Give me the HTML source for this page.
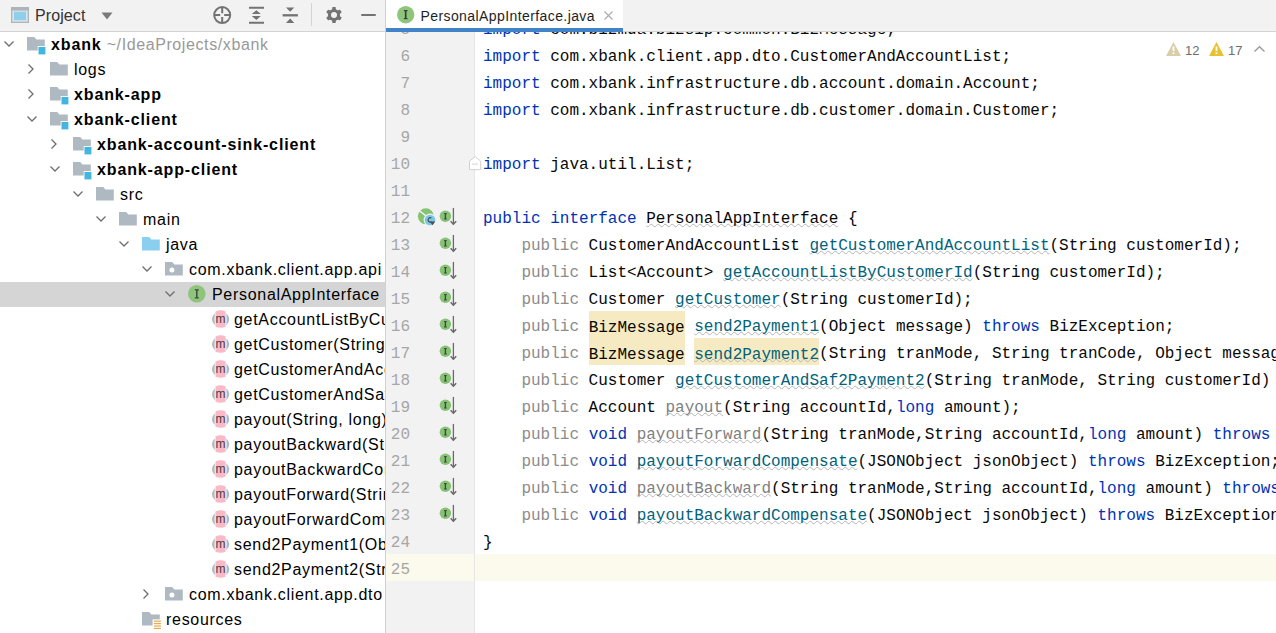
<!DOCTYPE html>
<html><head><meta charset="utf-8"><title>IDE</title>
<style>
*{box-sizing:border-box;margin:0;padding:0}
html,body{width:1276px;height:633px;overflow:hidden;background:#fff}
body{position:relative;font-family:"Liberation Sans",sans-serif}
.abs{position:absolute}
svg{position:absolute;overflow:visible}
#lp{position:absolute;left:0;top:0;width:385px;height:633px;background:#fff;overflow:hidden}
#lph{position:absolute;left:0;top:0;width:385px;height:32px;background:#F2F2F2;border-bottom:1px solid #D4D4D4}
#div{position:absolute;left:385px;top:0;width:1px;height:633px;background:#D1D1D1}
.row{position:absolute;left:0;width:385px;height:25px;white-space:nowrap}
.sel{background:#D5D5D5}
.tx{position:absolute;top:0;line-height:25px;font-size:16px;letter-spacing:0.7px;color:#000;white-space:nowrap}
.b{font-weight:bold;letter-spacing:0.87px}
.gr{color:#999999;font-weight:normal;letter-spacing:0.6px}
#ed{position:absolute;left:386px;top:0;width:890px;height:633px;overflow:hidden;background:#fff}
#tabbar{position:absolute;left:0;top:0;width:890px;height:32px;background:#F2F2F2;border-bottom:1px solid #D4D4D4}
#tab{position:absolute;left:0;top:0;width:237px;height:32px;background:#fff}
#tabul{position:absolute;left:0;top:28px;width:237px;height:4px;background:#4083C9}
#gut{position:absolute;left:0;top:32px;width:89px;height:601px;background:#F2F2F2;border-right:1px solid #E6E6E6}
#caret{position:absolute;left:0;top:554px;width:890px;height:27px;background:#FCFAED}
#code{position:absolute;left:97px;top:17px;font-family:"Liberation Mono",monospace;font-size:16px;line-height:27px;white-space:pre;color:#080808}
.cl{height:27px}
.ln{position:absolute;left:0;width:24px;text-align:right;font-family:"Liberation Mono",monospace;font-size:16px;color:#A6A6A6;line-height:27px}
.k{color:#0033B3}
.p{color:#8C8C8C}
.m{color:#00627A}
.u{color:#808080}
.w{text-decoration:underline wavy #B4B4B4;text-decoration-thickness:1px;text-underline-offset:0px;text-decoration-skip-ink:none}
.hl{background:#F5EAC1;padding:7.5px 0 1.5px 0}
</style></head><body>
<div id="lp">
<div id="lph">
<svg style="left:11px;top:7px" width="19" height="17" viewBox="0 0 19 17"><rect x="0" y="0" width="18" height="16" fill="#ADB4BA"/><rect x="1.3" y="3.6" width="15.4" height="11.1" fill="#DDE3E7"/><rect x="3" y="4.8" width="12" height="8.4" fill="#8ED0EB"/></svg>
<div class="tx" style="left:35px;top:3px;color:#333;letter-spacing:0.1px">Project</div>
<svg style="left:101px;top:12px" width="12" height="8"><path d="M0.5 0.5 L11.5 0.5 L6 7.5Z" fill="#7A7A7A"/></svg>
<svg style="left:213px;top:6px" width="19" height="19" viewBox="0 0 19 19"><circle cx="9.2" cy="9.1" r="8" fill="none" stroke="#737373" stroke-width="2"/><path d="M9.2 1.5 V7.2 M9.2 11 V16.8 M1.5 9.1 H7.2 M11.2 9.1 H16.8" stroke="#737373" stroke-width="2"/></svg>
<svg style="left:248px;top:6px" width="17" height="18" viewBox="0 0 17 18"><path d="M1 1.75 H16 M1 16.7 H16" stroke="#737373" stroke-width="2.1"/><path d="M3.8 8.1 L8.4 4.2 L12.8 8.1Z M3.8 10.1 L8.4 14 L12.8 10.1Z" fill="#737373"/></svg>
<svg style="left:282px;top:6px" width="16" height="18" viewBox="0 0 16 18"><path d="M0.6 9.3 H15.9" stroke="#737373" stroke-width="2.3"/><path d="M4 1.4 H12.3 L8.15 5.8Z M4 17.1 H12.3 L8.15 12.4Z" fill="#737373"/></svg>
<div class="abs" style="left:311px;top:3px;width:1px;height:23px;background:#D3D3D3"></div>
<svg style="left:326px;top:7px" width="16" height="16" viewBox="0 0 16 16"><g fill="#737373"><circle cx="8" cy="8" r="6.1"/><rect x="6.2" y="0" width="3.6" height="16" rx="0.8"/><rect x="6.2" y="0" width="3.6" height="16" rx="0.8" transform="rotate(60 8 8)"/><rect x="6.2" y="0" width="3.6" height="16" rx="0.8" transform="rotate(120 8 8)"/></g><circle cx="8" cy="8" r="3" fill="#F2F2F2"/></svg>
<div class="abs" style="left:360.5px;top:14px;width:15.5px;height:2.2px;background:#737373;border-radius:1px"></div>
</div>
<div class="row" style="top:32px"><svg style="left:3.8px;top:8.7px" width="10" height="6"><path d="M0.5 0.5 L5 5 L9.5 0.5" fill="none" stroke="#6E6E6E" stroke-width="1.3"/></svg><svg style="left:27.1px;top:4.6px" width="19" height="18" viewBox="0 0 19 18"><path d="M0 0 H7.2 L9.4 2.4 H17.8 V13.6 H0 Z" fill="#AFB9C1"/><rect x="10.7" y="9.1" width="8.3" height="8.6" fill="#fff"/><rect x="11.5" y="10" width="6.9" height="7.4" fill="#40B6E0"/></svg><div class="tx" style="left:51px"><span class="b">xbank</span><span class="gr">  ~/IdeaProjects/xbank</span></div></div>
<div class="row" style="top:57px"><svg style="left:28.4px;top:6.6px" width="6" height="10"><path d="M0.5 0.5 L5 5 L0.5 9.5" fill="none" stroke="#6E6E6E" stroke-width="1.3"/></svg><svg style="left:50.1px;top:4.6px" width="19" height="18" viewBox="0 0 19 18"><path d="M0 0 H7.2 L9.4 2.4 H17.8 V13.6 H0 Z" fill="#AFB9C1"/></svg><div class="tx" style="left:74px">logs</div></div>
<div class="row" style="top:82px"><svg style="left:28.4px;top:6.6px" width="6" height="10"><path d="M0.5 0.5 L5 5 L0.5 9.5" fill="none" stroke="#6E6E6E" stroke-width="1.3"/></svg><svg style="left:50.1px;top:4.6px" width="19" height="18" viewBox="0 0 19 18"><path d="M0 0 H7.2 L9.4 2.4 H17.8 V13.6 H0 Z" fill="#AFB9C1"/><rect x="10.7" y="9.1" width="8.3" height="8.6" fill="#fff"/><rect x="11.5" y="10" width="6.9" height="7.4" fill="#40B6E0"/></svg><div class="tx" style="left:74px"><span class="b">xbank-app</span></div></div>
<div class="row" style="top:107px"><svg style="left:26.8px;top:8.7px" width="10" height="6"><path d="M0.5 0.5 L5 5 L9.5 0.5" fill="none" stroke="#6E6E6E" stroke-width="1.3"/></svg><svg style="left:50.1px;top:4.6px" width="19" height="18" viewBox="0 0 19 18"><path d="M0 0 H7.2 L9.4 2.4 H17.8 V13.6 H0 Z" fill="#AFB9C1"/><rect x="10.7" y="9.1" width="8.3" height="8.6" fill="#fff"/><rect x="11.5" y="10" width="6.9" height="7.4" fill="#40B6E0"/></svg><div class="tx" style="left:74px"><span class="b">xbank-client</span></div></div>
<div class="row" style="top:132px"><svg style="left:51.4px;top:6.6px" width="6" height="10"><path d="M0.5 0.5 L5 5 L0.5 9.5" fill="none" stroke="#6E6E6E" stroke-width="1.3"/></svg><svg style="left:73.1px;top:4.6px" width="19" height="18" viewBox="0 0 19 18"><path d="M0 0 H7.2 L9.4 2.4 H17.8 V13.6 H0 Z" fill="#AFB9C1"/><rect x="10.7" y="9.1" width="8.3" height="8.6" fill="#fff"/><rect x="11.5" y="10" width="6.9" height="7.4" fill="#40B6E0"/></svg><div class="tx" style="left:97px"><span class="b">xbank-account-sink-client</span></div></div>
<div class="row" style="top:157px"><svg style="left:49.8px;top:8.7px" width="10" height="6"><path d="M0.5 0.5 L5 5 L9.5 0.5" fill="none" stroke="#6E6E6E" stroke-width="1.3"/></svg><svg style="left:73.1px;top:4.6px" width="19" height="18" viewBox="0 0 19 18"><path d="M0 0 H7.2 L9.4 2.4 H17.8 V13.6 H0 Z" fill="#AFB9C1"/><rect x="10.7" y="9.1" width="8.3" height="8.6" fill="#fff"/><rect x="11.5" y="10" width="6.9" height="7.4" fill="#40B6E0"/></svg><div class="tx" style="left:97px"><span class="b">xbank-app-client</span></div></div>
<div class="row" style="top:182px"><svg style="left:72.8px;top:8.7px" width="10" height="6"><path d="M0.5 0.5 L5 5 L9.5 0.5" fill="none" stroke="#6E6E6E" stroke-width="1.3"/></svg><svg style="left:96.1px;top:4.6px" width="19" height="18" viewBox="0 0 19 18"><path d="M0 0 H7.2 L9.4 2.4 H17.8 V13.6 H0 Z" fill="#AFB9C1"/></svg><div class="tx" style="left:120px">src</div></div>
<div class="row" style="top:207px"><svg style="left:95.8px;top:8.7px" width="10" height="6"><path d="M0.5 0.5 L5 5 L9.5 0.5" fill="none" stroke="#6E6E6E" stroke-width="1.3"/></svg><svg style="left:119.1px;top:4.6px" width="19" height="18" viewBox="0 0 19 18"><path d="M0 0 H7.2 L9.4 2.4 H17.8 V13.6 H0 Z" fill="#AFB9C1"/></svg><div class="tx" style="left:143px">main</div></div>
<div class="row" style="top:232px"><svg style="left:118.8px;top:8.7px" width="10" height="6"><path d="M0.5 0.5 L5 5 L9.5 0.5" fill="none" stroke="#6E6E6E" stroke-width="1.3"/></svg><svg style="left:142.1px;top:4.6px" width="19" height="18" viewBox="0 0 19 18"><path d="M0 0 H7.2 L9.4 2.4 H17.8 V13.6 H0 Z" fill="#8ACFEF"/></svg><div class="tx" style="left:166px">java</div></div>
<div class="row" style="top:257px"><svg style="left:141.8px;top:8.7px" width="10" height="6"><path d="M0.5 0.5 L5 5 L9.5 0.5" fill="none" stroke="#6E6E6E" stroke-width="1.3"/></svg><svg style="left:165.1px;top:4.6px" width="19" height="18" viewBox="0 0 19 18"><path d="M0 0 H7.2 L9.4 2.4 H17.8 V13.6 H0 Z" fill="#AFB9C1"/><circle cx="6.9" cy="7.9" r="2.5" fill="#fff"/></svg><div class="tx" style="left:189px">com.xbank.client.app.api</div></div>
<div class="row sel" style="top:282px"><svg style="left:164.8px;top:8.7px" width="10" height="6"><path d="M0.5 0.5 L5 5 L9.5 0.5" fill="none" stroke="#6E6E6E" stroke-width="1.3"/></svg><svg style="left:188.29999999999998px;top:3.1999999999999993px" width="17.6" height="17.6" viewBox="0 0 17.6 17.6"><circle cx="8.8" cy="8.8" r="8.8" fill="#8DC67B"/><path d="M6.800000000000001 4.800000000000001 H10.8 M6.800000000000001 12.8 H10.8" stroke="#3F4A3F" stroke-width="1.3" fill="none"/><path d="M8.8 4.800000000000001 V12.8" stroke="#3F4A3F" stroke-width="1.5" fill="none"/></svg><div class="tx" style="left:212px">PersonalAppInterface</div></div>
<div class="row" style="top:307px"><svg style="left:210.5px;top:2.5999999999999996px" width="20" height="18" viewBox="0 0 20 18"><path d="M3.9 3.2 Q-2.2 9.25 3.9 15.3 Q3.2 9.25 3.9 3.2Z" fill="#AEB9C3"/><path d="M15.3 3.2 Q21.4 9.25 15.3 15.3 Q16 9.25 15.3 3.2Z" fill="#AEB9C3"/><path d="M4.5 1.4 Q9.55 -0.7 14.6 1.4 V16.8 Q9.55 18.9 4.5 16.8 Z" fill="#F9B9C6"/><text x="9.6" y="13" text-anchor="middle" font-family="Liberation Sans" font-size="12" fill="#4B3B3F">m</text></svg><div class="tx" style="left:234px">getAccountListByCustomerId(String)</div></div>
<div class="row" style="top:332px"><svg style="left:210.5px;top:2.5999999999999996px" width="20" height="18" viewBox="0 0 20 18"><path d="M3.9 3.2 Q-2.2 9.25 3.9 15.3 Q3.2 9.25 3.9 3.2Z" fill="#AEB9C3"/><path d="M15.3 3.2 Q21.4 9.25 15.3 15.3 Q16 9.25 15.3 3.2Z" fill="#AEB9C3"/><path d="M4.5 1.4 Q9.55 -0.7 14.6 1.4 V16.8 Q9.55 18.9 4.5 16.8 Z" fill="#F9B9C6"/><text x="9.6" y="13" text-anchor="middle" font-family="Liberation Sans" font-size="12" fill="#4B3B3F">m</text></svg><div class="tx" style="left:234px">getCustomer(String)</div></div>
<div class="row" style="top:357px"><svg style="left:210.5px;top:2.5999999999999996px" width="20" height="18" viewBox="0 0 20 18"><path d="M3.9 3.2 Q-2.2 9.25 3.9 15.3 Q3.2 9.25 3.9 3.2Z" fill="#AEB9C3"/><path d="M15.3 3.2 Q21.4 9.25 15.3 15.3 Q16 9.25 15.3 3.2Z" fill="#AEB9C3"/><path d="M4.5 1.4 Q9.55 -0.7 14.6 1.4 V16.8 Q9.55 18.9 4.5 16.8 Z" fill="#F9B9C6"/><text x="9.6" y="13" text-anchor="middle" font-family="Liberation Sans" font-size="12" fill="#4B3B3F">m</text></svg><div class="tx" style="left:234px">getCustomerAndAccountList(String)</div></div>
<div class="row" style="top:382px"><svg style="left:210.5px;top:2.5999999999999996px" width="20" height="18" viewBox="0 0 20 18"><path d="M3.9 3.2 Q-2.2 9.25 3.9 15.3 Q3.2 9.25 3.9 3.2Z" fill="#AEB9C3"/><path d="M15.3 3.2 Q21.4 9.25 15.3 15.3 Q16 9.25 15.3 3.2Z" fill="#AEB9C3"/><path d="M4.5 1.4 Q9.55 -0.7 14.6 1.4 V16.8 Q9.55 18.9 4.5 16.8 Z" fill="#F9B9C6"/><text x="9.6" y="13" text-anchor="middle" font-family="Liberation Sans" font-size="12" fill="#4B3B3F">m</text></svg><div class="tx" style="left:234px">getCustomerAndSaf2Payment2(String, String)</div></div>
<div class="row" style="top:407px"><svg style="left:210.5px;top:2.5999999999999996px" width="20" height="18" viewBox="0 0 20 18"><path d="M3.9 3.2 Q-2.2 9.25 3.9 15.3 Q3.2 9.25 3.9 3.2Z" fill="#AEB9C3"/><path d="M15.3 3.2 Q21.4 9.25 15.3 15.3 Q16 9.25 15.3 3.2Z" fill="#AEB9C3"/><path d="M4.5 1.4 Q9.55 -0.7 14.6 1.4 V16.8 Q9.55 18.9 4.5 16.8 Z" fill="#F9B9C6"/><text x="9.6" y="13" text-anchor="middle" font-family="Liberation Sans" font-size="12" fill="#4B3B3F">m</text></svg><div class="tx" style="left:234px">payout(String, long)</div></div>
<div class="row" style="top:432px"><svg style="left:210.5px;top:2.5999999999999996px" width="20" height="18" viewBox="0 0 20 18"><path d="M3.9 3.2 Q-2.2 9.25 3.9 15.3 Q3.2 9.25 3.9 3.2Z" fill="#AEB9C3"/><path d="M15.3 3.2 Q21.4 9.25 15.3 15.3 Q16 9.25 15.3 3.2Z" fill="#AEB9C3"/><path d="M4.5 1.4 Q9.55 -0.7 14.6 1.4 V16.8 Q9.55 18.9 4.5 16.8 Z" fill="#F9B9C6"/><text x="9.6" y="13" text-anchor="middle" font-family="Liberation Sans" font-size="12" fill="#4B3B3F">m</text></svg><div class="tx" style="left:234px">payoutBackward(String, String, long)</div></div>
<div class="row" style="top:457px"><svg style="left:210.5px;top:2.5999999999999996px" width="20" height="18" viewBox="0 0 20 18"><path d="M3.9 3.2 Q-2.2 9.25 3.9 15.3 Q3.2 9.25 3.9 3.2Z" fill="#AEB9C3"/><path d="M15.3 3.2 Q21.4 9.25 15.3 15.3 Q16 9.25 15.3 3.2Z" fill="#AEB9C3"/><path d="M4.5 1.4 Q9.55 -0.7 14.6 1.4 V16.8 Q9.55 18.9 4.5 16.8 Z" fill="#F9B9C6"/><text x="9.6" y="13" text-anchor="middle" font-family="Liberation Sans" font-size="12" fill="#4B3B3F">m</text></svg><div class="tx" style="left:234px">payoutBackwardCompensate(JSONObject)</div></div>
<div class="row" style="top:482px"><svg style="left:210.5px;top:2.5999999999999996px" width="20" height="18" viewBox="0 0 20 18"><path d="M3.9 3.2 Q-2.2 9.25 3.9 15.3 Q3.2 9.25 3.9 3.2Z" fill="#AEB9C3"/><path d="M15.3 3.2 Q21.4 9.25 15.3 15.3 Q16 9.25 15.3 3.2Z" fill="#AEB9C3"/><path d="M4.5 1.4 Q9.55 -0.7 14.6 1.4 V16.8 Q9.55 18.9 4.5 16.8 Z" fill="#F9B9C6"/><text x="9.6" y="13" text-anchor="middle" font-family="Liberation Sans" font-size="12" fill="#4B3B3F">m</text></svg><div class="tx" style="left:234px">payoutForward(String, String, long)</div></div>
<div class="row" style="top:507px"><svg style="left:210.5px;top:2.5999999999999996px" width="20" height="18" viewBox="0 0 20 18"><path d="M3.9 3.2 Q-2.2 9.25 3.9 15.3 Q3.2 9.25 3.9 3.2Z" fill="#AEB9C3"/><path d="M15.3 3.2 Q21.4 9.25 15.3 15.3 Q16 9.25 15.3 3.2Z" fill="#AEB9C3"/><path d="M4.5 1.4 Q9.55 -0.7 14.6 1.4 V16.8 Q9.55 18.9 4.5 16.8 Z" fill="#F9B9C6"/><text x="9.6" y="13" text-anchor="middle" font-family="Liberation Sans" font-size="12" fill="#4B3B3F">m</text></svg><div class="tx" style="left:234px">payoutForwardCompensate(JSONObject)</div></div>
<div class="row" style="top:532px"><svg style="left:210.5px;top:2.5999999999999996px" width="20" height="18" viewBox="0 0 20 18"><path d="M3.9 3.2 Q-2.2 9.25 3.9 15.3 Q3.2 9.25 3.9 3.2Z" fill="#AEB9C3"/><path d="M15.3 3.2 Q21.4 9.25 15.3 15.3 Q16 9.25 15.3 3.2Z" fill="#AEB9C3"/><path d="M4.5 1.4 Q9.55 -0.7 14.6 1.4 V16.8 Q9.55 18.9 4.5 16.8 Z" fill="#F9B9C6"/><text x="9.6" y="13" text-anchor="middle" font-family="Liberation Sans" font-size="12" fill="#4B3B3F">m</text></svg><div class="tx" style="left:234px">send2Payment1(Object)</div></div>
<div class="row" style="top:557px"><svg style="left:210.5px;top:2.5999999999999996px" width="20" height="18" viewBox="0 0 20 18"><path d="M3.9 3.2 Q-2.2 9.25 3.9 15.3 Q3.2 9.25 3.9 3.2Z" fill="#AEB9C3"/><path d="M15.3 3.2 Q21.4 9.25 15.3 15.3 Q16 9.25 15.3 3.2Z" fill="#AEB9C3"/><path d="M4.5 1.4 Q9.55 -0.7 14.6 1.4 V16.8 Q9.55 18.9 4.5 16.8 Z" fill="#F9B9C6"/><text x="9.6" y="13" text-anchor="middle" font-family="Liberation Sans" font-size="12" fill="#4B3B3F">m</text></svg><div class="tx" style="left:234px">send2Payment2(String, String, Object)</div></div>
<div class="row" style="top:582px"><svg style="left:143.4px;top:6.6px" width="6" height="10"><path d="M0.5 0.5 L5 5 L0.5 9.5" fill="none" stroke="#6E6E6E" stroke-width="1.3"/></svg><svg style="left:165.1px;top:4.6px" width="19" height="18" viewBox="0 0 19 18"><path d="M0 0 H7.2 L9.4 2.4 H17.8 V13.6 H0 Z" fill="#AFB9C1"/><circle cx="6.9" cy="7.9" r="2.5" fill="#fff"/></svg><div class="tx" style="left:189px">com.xbank.client.app.dto</div></div>
<div class="row" style="top:607px"><svg style="left:142.1px;top:4.6px" width="19" height="18" viewBox="0 0 19 18"><path d="M0 0 H7.2 L9.4 2.4 H17.8 V13.6 H0 Z" fill="#AFB9C1"/><rect x="10.6" y="7.4" width="8.4" height="10.6" fill="#fff"/><g fill="#E8A94A"><rect x="11.9" y="8.6" width="7" height="1.2"/><rect x="11.9" y="11" width="7" height="1.2"/><rect x="11.9" y="13.4" width="7" height="1.2"/><rect x="11.9" y="15.8" width="7" height="1.2"/></g></svg><div class="tx" style="left:166px">resources</div></div>
</div>
<div id="div"></div>
<div id="ed">
<div id="caret"></div>
<div id="code"><div class="cl"><span class="k">import</span> com.bizmda.bizsip.common.BizMessage;</div><div class="cl"><span class="k">import</span> com.xbank.client.app.dto.CustomerAndAccountList;</div><div class="cl"><span class="k">import</span> com.xbank.infrastructure.db.account.domain.Account;</div><div class="cl"><span class="k">import</span> com.xbank.infrastructure.db.customer.domain.Customer;</div><div class="cl"></div><div class="cl"><span class="k">import</span> java.util.List;</div><div class="cl"></div><div class="cl"><span class="k">public</span> <span class="k">interface</span> <span class="w">PersonalAppInterface</span> {</div><div class="cl">    <span class="p">public</span> CustomerAndAccountList <span class="m w">getCustomerAndAccountList</span>(String customerId);</div><div class="cl">    <span class="p">public</span> List&lt;Account&gt; <span class="m w">getAccountListByCustomerId</span>(String customerId);</div><div class="cl">    <span class="p">public</span> Customer <span class="m w">getCustomer</span>(String customerId);</div><div class="cl">    <span class="p">public</span> <span class="hl">BizMessage</span> <span class="m w">send2Payment1</span>(Object message) <span class="k">throws</span> BizException;</div><div class="cl">    <span class="p">public</span> <span class="hl">BizMessage</span> <span class="m w hl">send2Payment2</span>(String tranMode, String tranCode, Object message) <span class="k">throws</span> BizException;</div><div class="cl">    <span class="p">public</span> Customer <span class="m w">getCustomerAndSaf2Payment2</span>(String tranMode, String customerId) <span class="k">throws</span> BizException;</div><div class="cl">    <span class="p">public</span> Account <span class="u w">payout</span>(String accountId,<span class="k">long</span> amount);</div><div class="cl">    <span class="p">public</span> <span class="k">void</span> <span class="u w">payoutForward</span>(String tranMode,String accountId,<span class="k">long</span> amount) <span class="k">throws</span> BizException;</div><div class="cl">    <span class="p">public</span> <span class="k">void</span> <span class="m w">payoutForwardCompensate</span>(JSONObject jsonObject) <span class="k">throws</span> BizException;</div><div class="cl">    <span class="p">public</span> <span class="k">void</span> <span class="u w">payoutBackward</span>(String tranMode,String accountId,<span class="k">long</span> amount) <span class="k">throws</span> BizException;</div><div class="cl">    <span class="p">public</span> <span class="k">void</span> <span class="m w">payoutBackwardCompensate</span>(JSONObject jsonObject) <span class="k">throws</span> BizException;</div><div class="cl">}</div><div class="cl"></div></div>
<div id="gut">
<div class="abs" style="left:0;top:522px;width:88px;height:27px;background:#FCFAED"></div>
<div class="ln" style="top:-15px">5</div>
<div class="ln" style="top:12px">6</div>
<div class="ln" style="top:39px">7</div>
<div class="ln" style="top:66px">8</div>
<div class="ln" style="top:93px">9</div>
<div class="ln" style="top:120px">10</div>
<div class="ln" style="top:147px">11</div>
<div class="ln" style="top:174px">12</div>
<div class="ln" style="top:201px">13</div>
<div class="ln" style="top:228px">14</div>
<div class="ln" style="top:255px">15</div>
<div class="ln" style="top:282px">16</div>
<div class="ln" style="top:309px">17</div>
<div class="ln" style="top:336px">18</div>
<div class="ln" style="top:363px">19</div>
<div class="ln" style="top:390px">20</div>
<div class="ln" style="top:417px">21</div>
<div class="ln" style="top:444px">22</div>
<div class="ln" style="top:471px">23</div>
<div class="ln" style="top:498px">24</div>
<div class="ln" style="top:525px">25</div>
<svg style="left:53px;top:173px" width="20" height="20" viewBox="0 0 20 20"><circle cx="6.4" cy="11.3" r="5.75" fill="#86C273"/><path d="M5 8.6 H7.8 M5 14 H7.8" stroke="#404540" stroke-width="1" fill="none"/><path d="M6.4 8.6 V14" stroke="#404540" stroke-width="1.35"/><path d="M14.4 2.9 V19.4" stroke="#6A6A6A" stroke-width="1.3" fill="none"/><path d="M11.6 16.3 L14.4 19.2 L17.2 16.3" stroke="#6A6A6A" stroke-width="1.5" fill="none"/></svg>
<svg style="left:53px;top:200px" width="20" height="20" viewBox="0 0 20 20"><circle cx="6.4" cy="11.3" r="5.75" fill="#86C273"/><path d="M5 8.6 H7.8 M5 14 H7.8" stroke="#404540" stroke-width="1" fill="none"/><path d="M6.4 8.6 V14" stroke="#404540" stroke-width="1.35"/><path d="M14.4 2.9 V19.4" stroke="#6A6A6A" stroke-width="1.3" fill="none"/><path d="M11.6 16.3 L14.4 19.2 L17.2 16.3" stroke="#6A6A6A" stroke-width="1.5" fill="none"/></svg>
<svg style="left:53px;top:227px" width="20" height="20" viewBox="0 0 20 20"><circle cx="6.4" cy="11.3" r="5.75" fill="#86C273"/><path d="M5 8.6 H7.8 M5 14 H7.8" stroke="#404540" stroke-width="1" fill="none"/><path d="M6.4 8.6 V14" stroke="#404540" stroke-width="1.35"/><path d="M14.4 2.9 V19.4" stroke="#6A6A6A" stroke-width="1.3" fill="none"/><path d="M11.6 16.3 L14.4 19.2 L17.2 16.3" stroke="#6A6A6A" stroke-width="1.5" fill="none"/></svg>
<svg style="left:53px;top:254px" width="20" height="20" viewBox="0 0 20 20"><circle cx="6.4" cy="11.3" r="5.75" fill="#86C273"/><path d="M5 8.6 H7.8 M5 14 H7.8" stroke="#404540" stroke-width="1" fill="none"/><path d="M6.4 8.6 V14" stroke="#404540" stroke-width="1.35"/><path d="M14.4 2.9 V19.4" stroke="#6A6A6A" stroke-width="1.3" fill="none"/><path d="M11.6 16.3 L14.4 19.2 L17.2 16.3" stroke="#6A6A6A" stroke-width="1.5" fill="none"/></svg>
<svg style="left:53px;top:281px" width="20" height="20" viewBox="0 0 20 20"><circle cx="6.4" cy="11.3" r="5.75" fill="#86C273"/><path d="M5 8.6 H7.8 M5 14 H7.8" stroke="#404540" stroke-width="1" fill="none"/><path d="M6.4 8.6 V14" stroke="#404540" stroke-width="1.35"/><path d="M14.4 2.9 V19.4" stroke="#6A6A6A" stroke-width="1.3" fill="none"/><path d="M11.6 16.3 L14.4 19.2 L17.2 16.3" stroke="#6A6A6A" stroke-width="1.5" fill="none"/></svg>
<svg style="left:53px;top:308px" width="20" height="20" viewBox="0 0 20 20"><circle cx="6.4" cy="11.3" r="5.75" fill="#86C273"/><path d="M5 8.6 H7.8 M5 14 H7.8" stroke="#404540" stroke-width="1" fill="none"/><path d="M6.4 8.6 V14" stroke="#404540" stroke-width="1.35"/><path d="M14.4 2.9 V19.4" stroke="#6A6A6A" stroke-width="1.3" fill="none"/><path d="M11.6 16.3 L14.4 19.2 L17.2 16.3" stroke="#6A6A6A" stroke-width="1.5" fill="none"/></svg>
<svg style="left:53px;top:335px" width="20" height="20" viewBox="0 0 20 20"><circle cx="6.4" cy="11.3" r="5.75" fill="#86C273"/><path d="M5 8.6 H7.8 M5 14 H7.8" stroke="#404540" stroke-width="1" fill="none"/><path d="M6.4 8.6 V14" stroke="#404540" stroke-width="1.35"/><path d="M14.4 2.9 V19.4" stroke="#6A6A6A" stroke-width="1.3" fill="none"/><path d="M11.6 16.3 L14.4 19.2 L17.2 16.3" stroke="#6A6A6A" stroke-width="1.5" fill="none"/></svg>
<svg style="left:53px;top:362px" width="20" height="20" viewBox="0 0 20 20"><circle cx="6.4" cy="11.3" r="5.75" fill="#86C273"/><path d="M5 8.6 H7.8 M5 14 H7.8" stroke="#404540" stroke-width="1" fill="none"/><path d="M6.4 8.6 V14" stroke="#404540" stroke-width="1.35"/><path d="M14.4 2.9 V19.4" stroke="#6A6A6A" stroke-width="1.3" fill="none"/><path d="M11.6 16.3 L14.4 19.2 L17.2 16.3" stroke="#6A6A6A" stroke-width="1.5" fill="none"/></svg>
<svg style="left:53px;top:389px" width="20" height="20" viewBox="0 0 20 20"><circle cx="6.4" cy="11.3" r="5.75" fill="#86C273"/><path d="M5 8.6 H7.8 M5 14 H7.8" stroke="#404540" stroke-width="1" fill="none"/><path d="M6.4 8.6 V14" stroke="#404540" stroke-width="1.35"/><path d="M14.4 2.9 V19.4" stroke="#6A6A6A" stroke-width="1.3" fill="none"/><path d="M11.6 16.3 L14.4 19.2 L17.2 16.3" stroke="#6A6A6A" stroke-width="1.5" fill="none"/></svg>
<svg style="left:53px;top:416px" width="20" height="20" viewBox="0 0 20 20"><circle cx="6.4" cy="11.3" r="5.75" fill="#86C273"/><path d="M5 8.6 H7.8 M5 14 H7.8" stroke="#404540" stroke-width="1" fill="none"/><path d="M6.4 8.6 V14" stroke="#404540" stroke-width="1.35"/><path d="M14.4 2.9 V19.4" stroke="#6A6A6A" stroke-width="1.3" fill="none"/><path d="M11.6 16.3 L14.4 19.2 L17.2 16.3" stroke="#6A6A6A" stroke-width="1.5" fill="none"/></svg>
<svg style="left:53px;top:443px" width="20" height="20" viewBox="0 0 20 20"><circle cx="6.4" cy="11.3" r="5.75" fill="#86C273"/><path d="M5 8.6 H7.8 M5 14 H7.8" stroke="#404540" stroke-width="1" fill="none"/><path d="M6.4 8.6 V14" stroke="#404540" stroke-width="1.35"/><path d="M14.4 2.9 V19.4" stroke="#6A6A6A" stroke-width="1.3" fill="none"/><path d="M11.6 16.3 L14.4 19.2 L17.2 16.3" stroke="#6A6A6A" stroke-width="1.5" fill="none"/></svg>
<svg style="left:53px;top:470px" width="20" height="20" viewBox="0 0 20 20"><circle cx="6.4" cy="11.3" r="5.75" fill="#86C273"/><path d="M5 8.6 H7.8 M5 14 H7.8" stroke="#404540" stroke-width="1" fill="none"/><path d="M6.4 8.6 V14" stroke="#404540" stroke-width="1.35"/><path d="M14.4 2.9 V19.4" stroke="#6A6A6A" stroke-width="1.3" fill="none"/><path d="M11.6 16.3 L14.4 19.2 L17.2 16.3" stroke="#6A6A6A" stroke-width="1.5" fill="none"/></svg>
<svg style="left:30px;top:173px" width="20" height="20" viewBox="0 0 20 20"><circle cx="9.9" cy="11.3" r="8" fill="#86C273"/><path d="M2.5 5 L9.6 10.6" stroke="#F2F2F2" stroke-width="1.5"/><circle cx="14" cy="15" r="6.4" fill="#F2F2F2"/><circle cx="14" cy="15" r="5.3" fill="#78C6EA"/><path d="M15.4 13 A2.2 2.2 0 1 0 15.4 16.8" stroke="#444" stroke-width="1.1" fill="none"/><path d="M13.8 16.6 L19.2 16.6 L16.5 20.3Z" fill="#4E4E4E"/></svg>
<svg style="left:83px;top:123.5px" width="13" height="15" viewBox="0 0 13 15"><path d="M0.5 5.2 L6.1 0.5 L11.7 5.2 V13.7 H0.5Z" fill="#fff" stroke="#D0D0D0" stroke-width="1"/><path d="M3 8.1 H9" stroke="#D4D4D4" stroke-width="1"/></svg>
</div>

<svg style="left:780px;top:42px" width="15" height="14" viewBox="0 0 15 14"><path d="M7.5 0 L15 14 H0Z" fill="#D8CFA8"/><rect x="6.6" y="4.5" width="1.8" height="4.5" fill="#fff"/><rect x="6.6" y="10.3" width="1.8" height="1.8" fill="#fff"/></svg>
<div class="tx" style="left:799px;top:37.5px;font-size:13px;letter-spacing:0.1px;color:#6E6E6E">12</div>
<svg style="left:823px;top:42px" width="15" height="14" viewBox="0 0 15 14"><path d="M7.5 0 L15 14 H0Z" fill="#E8C12E"/><rect x="6.6" y="4.5" width="1.8" height="4.5" fill="#fff"/><rect x="6.6" y="10.3" width="1.8" height="1.8" fill="#fff"/></svg>
<div class="tx" style="left:842px;top:37.5px;font-size:13px;letter-spacing:0.1px;color:#6E6E6E">17</div>
<svg style="left:868px;top:46px" width="11" height="6" viewBox="0 0 11 6"><path d="M0.5 5.5 L5.5 0.8 L10.5 5.5" stroke="#9A9A9A" stroke-width="1.4" fill="none"/></svg>

<div id="tabbar"><div id="tab">
<svg style="left:11.4px;top:6.1px" width="17.4" height="17.4" viewBox="0 0 17.4 17.4"><circle cx="8.7" cy="8.7" r="8.7" fill="#8DC67B"/><path d="M6.9 4.6 H10.5 M6.9 12.6 H10.5" stroke="#3D3D3D" stroke-width="1.2" fill="none"/><path d="M8.7 4.6 V12.6" stroke="#3D3D3D" stroke-width="1.7"/></svg>
<div class="tx" style="left:34.5px;top:3.5px;font-size:14px;letter-spacing:0.41px;color:#1E1E1E">PersonalAppInterface.java</div>
<svg style="left:217.5px;top:11px" width="9" height="9" viewBox="0 0 9 9"><path d="M0.5 0.5 L8.5 8.5 M8.5 0.5 L0.5 8.5" stroke="#ABABAB" stroke-width="1.1"/></svg>
</div><div id="tabul"></div></div>
</div>
</body></html>
